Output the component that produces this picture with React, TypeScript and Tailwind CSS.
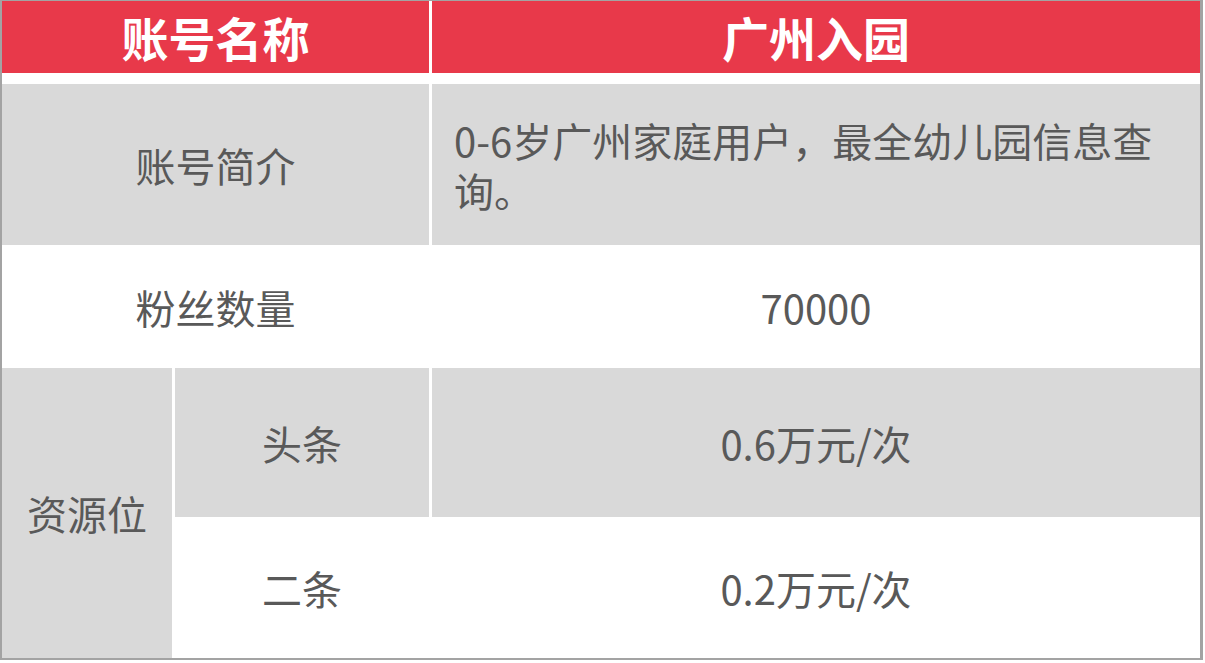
const font = "font-['Noto_Sans_CJK_SC','Noto_Sans',sans-serif]";

const Cell = ({ className = "", children }: { className?: string; children?: React.ReactNode }) => (
  <div className={`flex items-center justify-center ${className}`}>{children}</div>
);

const App = () => {
  return (
    <div className={`w-[1205px] h-[663px] bg-white ${font}`}>
      <div className="w-[1203px] h-[660px] border-t border-l-2 border-r-[3px] border-b-2 border-[#a3a3a3] flex flex-col text-[40px] text-[#595959]">
        {/* header */}
        <div className="h-[72px] flex gap-[3px] text-white font-bold text-[47px]">
          <Cell className="w-[427px] bg-[#e8394a]">账号名称</Cell>
          <Cell className="flex-1 bg-[#e8394a]">广州入园</Cell>
        </div>

        <div className="mt-[11px] h-[161px] flex gap-[3px]">
          <Cell className="w-[427px] bg-[#d9d9d9]">账号简介</Cell>
          <div className="flex-1 bg-[#d9d9d9] flex items-center pl-[22px] pr-[40px] leading-[50px]">
            0-6岁广州家庭用户，最全幼儿园信息查询。
          </div>
        </div>

        <div className="h-[123px] flex gap-[3px] bg-white">
          <Cell className="w-[427px]">粉丝数量</Cell>
          <Cell className="flex-1">70000</Cell>
        </div>

        <div className="flex-1 flex gap-[3px]">
          <Cell className="w-[170px] bg-[#d9d9d9]">资源位</Cell>
          <div className="flex-1 flex flex-col">
            <div className="h-[149px] flex gap-[3px]">
              <Cell className="w-[254px] bg-[#d9d9d9]">头条</Cell>
              <Cell className="flex-1 bg-[#d9d9d9]">0.6万元/次</Cell>
            </div>
            <div className="flex-1 flex gap-[3px]">
              <Cell className="w-[254px]">二条</Cell>
              <Cell className="flex-1">0.2万元/次</Cell>
            </div>
          </div>
        </div>
      </div>
    </div>
  );
};

export default App;
